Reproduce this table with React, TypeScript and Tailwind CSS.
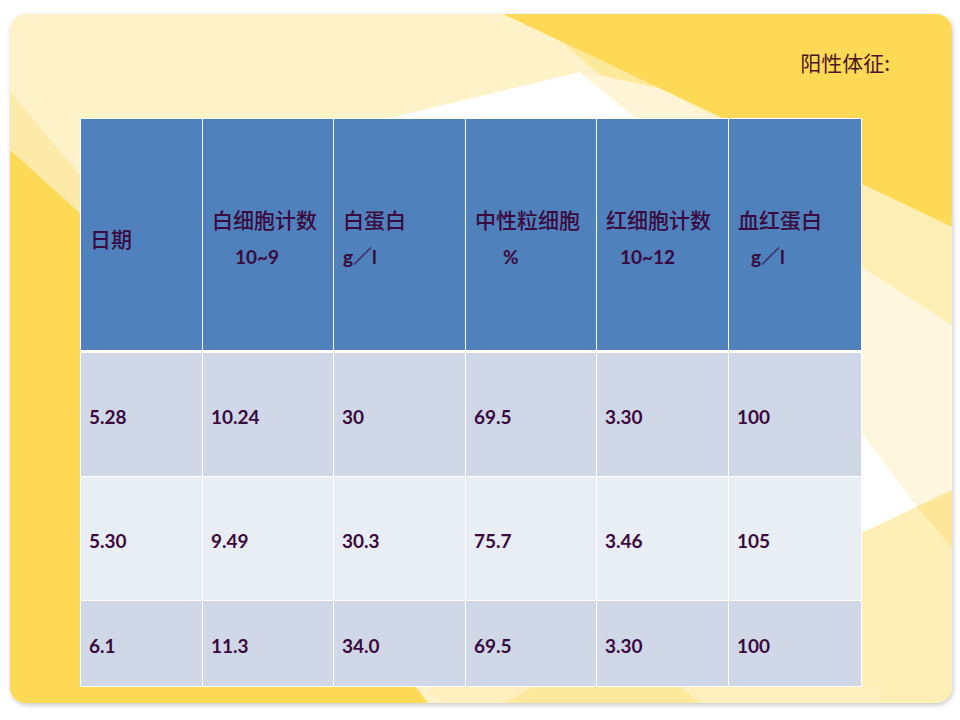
import React from 'react'

const HEADERS: { title: string; sub?: string; indent?: string }[] = [
  { title: '日期' },
  { title: '白细胞计数', sub: '10~9', indent: 'pl-[23px]' },
  { title: '白蛋白', sub: 'g／l', indent: 'pl-0' },
  { title: '中性粒细胞', sub: '%', indent: 'pl-[28px]' },
  { title: '红细胞计数', sub: '10~12', indent: 'pl-[14px]' },
  { title: '血红蛋白', sub: 'g／l', indent: 'pl-[13px]' },
]

const ROWS = [
  { h: 'h-[123px]', bg: 'bg-[#d0d8e8]', cells: ['5.28', '10.24', '30', '69.5', '3.30', '100'] },
  { h: 'h-[123px]', bg: 'bg-[#e9edf4]', cells: ['5.30', '9.49', '30.3', '75.7', '3.46', '105'] },
  { h: 'h-[85px]', bg: 'bg-[#d0d8e8]', cells: ['6.1', '11.3', '34.0', '69.5', '3.30', '100'] },
]

const COLS = 'grid grid-cols-[121px_130px_131px_130px_131px_132px] gap-x-px'

function Backdrop() {
  return (
    <svg
      viewBox="10 14 942 689"
      preserveAspectRatio="none"
      className="absolute inset-0 w-full h-full"
    >
      <rect x="10" y="14" width="942" height="689" fill="#fdf2c8" />
      {/* white wedge above table */}
      <polygon points="390,118 580,72 636,118" fill="#ffffff" />
      <polygon points="580,72 662,89 710,118 636,118" fill="#fef5d6" />
      {/* big yellow corner */}
      <polygon points="503,14 952,14 952,227" fill="#fed955" />
      <polygon points="560,40 662,89 600,75" fill="#fde27c" opacity="0.6" />
      {/* right side */}
      <polygon points="862,184 952,227 952,325 862,267" fill="#fdeeb4" />
      <polygon points="862,267 952,325 952,490 862,533" fill="#fef7de" />
      <polygon points="862,433 917,507 862,533" fill="#ffffff" />
      <polygon points="862,533 952,490 952,703 862,703" fill="#fdefb6" />
      <polygon points="917,507 952,490 952,548" fill="#fde697" />
      {/* left strip */}
      <polygon points="10,92 80,175 80,213 10,150" fill="#fdeaa8" />
      <polygon points="10,150 80,213 80,703 10,703" fill="#fed955" />
      {/* bottom strip */}
      <polygon points="10,686 415,686 428,703 10,703" fill="#fed955" />
      <polygon points="428,686 880,686 880,703 440,703" fill="#fdf0bd" />
      <polygon points="535,686 680,686 700,703 505,703" fill="#fde99c" />
    </svg>
  )
}

export default function App() {
  return (
    <div className="w-[960px] h-[720px] bg-white pt-[14px] pl-[10px]">
      <div className="relative w-[942px] h-[689px] rounded-[16px] overflow-hidden shadow-[1px_2px_5px_rgba(0,0,0,0.22)]">
        <Backdrop />
        <div className="relative flex flex-col">
          <div className="flex justify-end pr-[62px] pt-[34px]">
            <span className="text-[21px] leading-[28px] text-[#4a1626] font-['Noto_Sans_CJK_SC',sans-serif]">
              阳性体征:
            </span>
          </div>

          <div className="ml-[70px] mt-[42px] w-[782px] bg-white p-px flex flex-col gap-y-px text-[#3a0a3e]">
            {/* header */}
            <div className={`${COLS} h-[231px]`}>
              {HEADERS.map((h) => (
                <div key={h.title} className="bg-[#4f81bd] flex items-center pl-[9px] pt-[7px]">
                  <div>
                    <div className="text-[21px] leading-[38px] font-medium font-['Noto_Sans_CJK_SC',sans-serif]">
                      {h.title}
                    </div>
                    {h.sub && (
                      <div className={`${h.indent} text-[19px] leading-[38px] font-bold font-['Lato','Noto_Sans_CJK_SC',sans-serif]`}>
                        {h.sub}
                      </div>
                    )}
                  </div>
                </div>
              ))}
            </div>

            {/* body */}
            {ROWS.map((r, i) => (
              <div key={i} className={`${COLS} ${r.h} ${i === 0 ? 'mt-[2px]' : ''}`}>
                {r.cells.map((c, j) => (
                  <div
                    key={j}
                    className={`${r.bg} flex items-center pl-[8px] pt-[6px] text-[19px] font-bold font-['Lato',sans-serif]`}
                  >
                    {c}
                  </div>
                ))}
              </div>
            ))}
          </div>
        </div>
      </div>
    </div>
  )
}
